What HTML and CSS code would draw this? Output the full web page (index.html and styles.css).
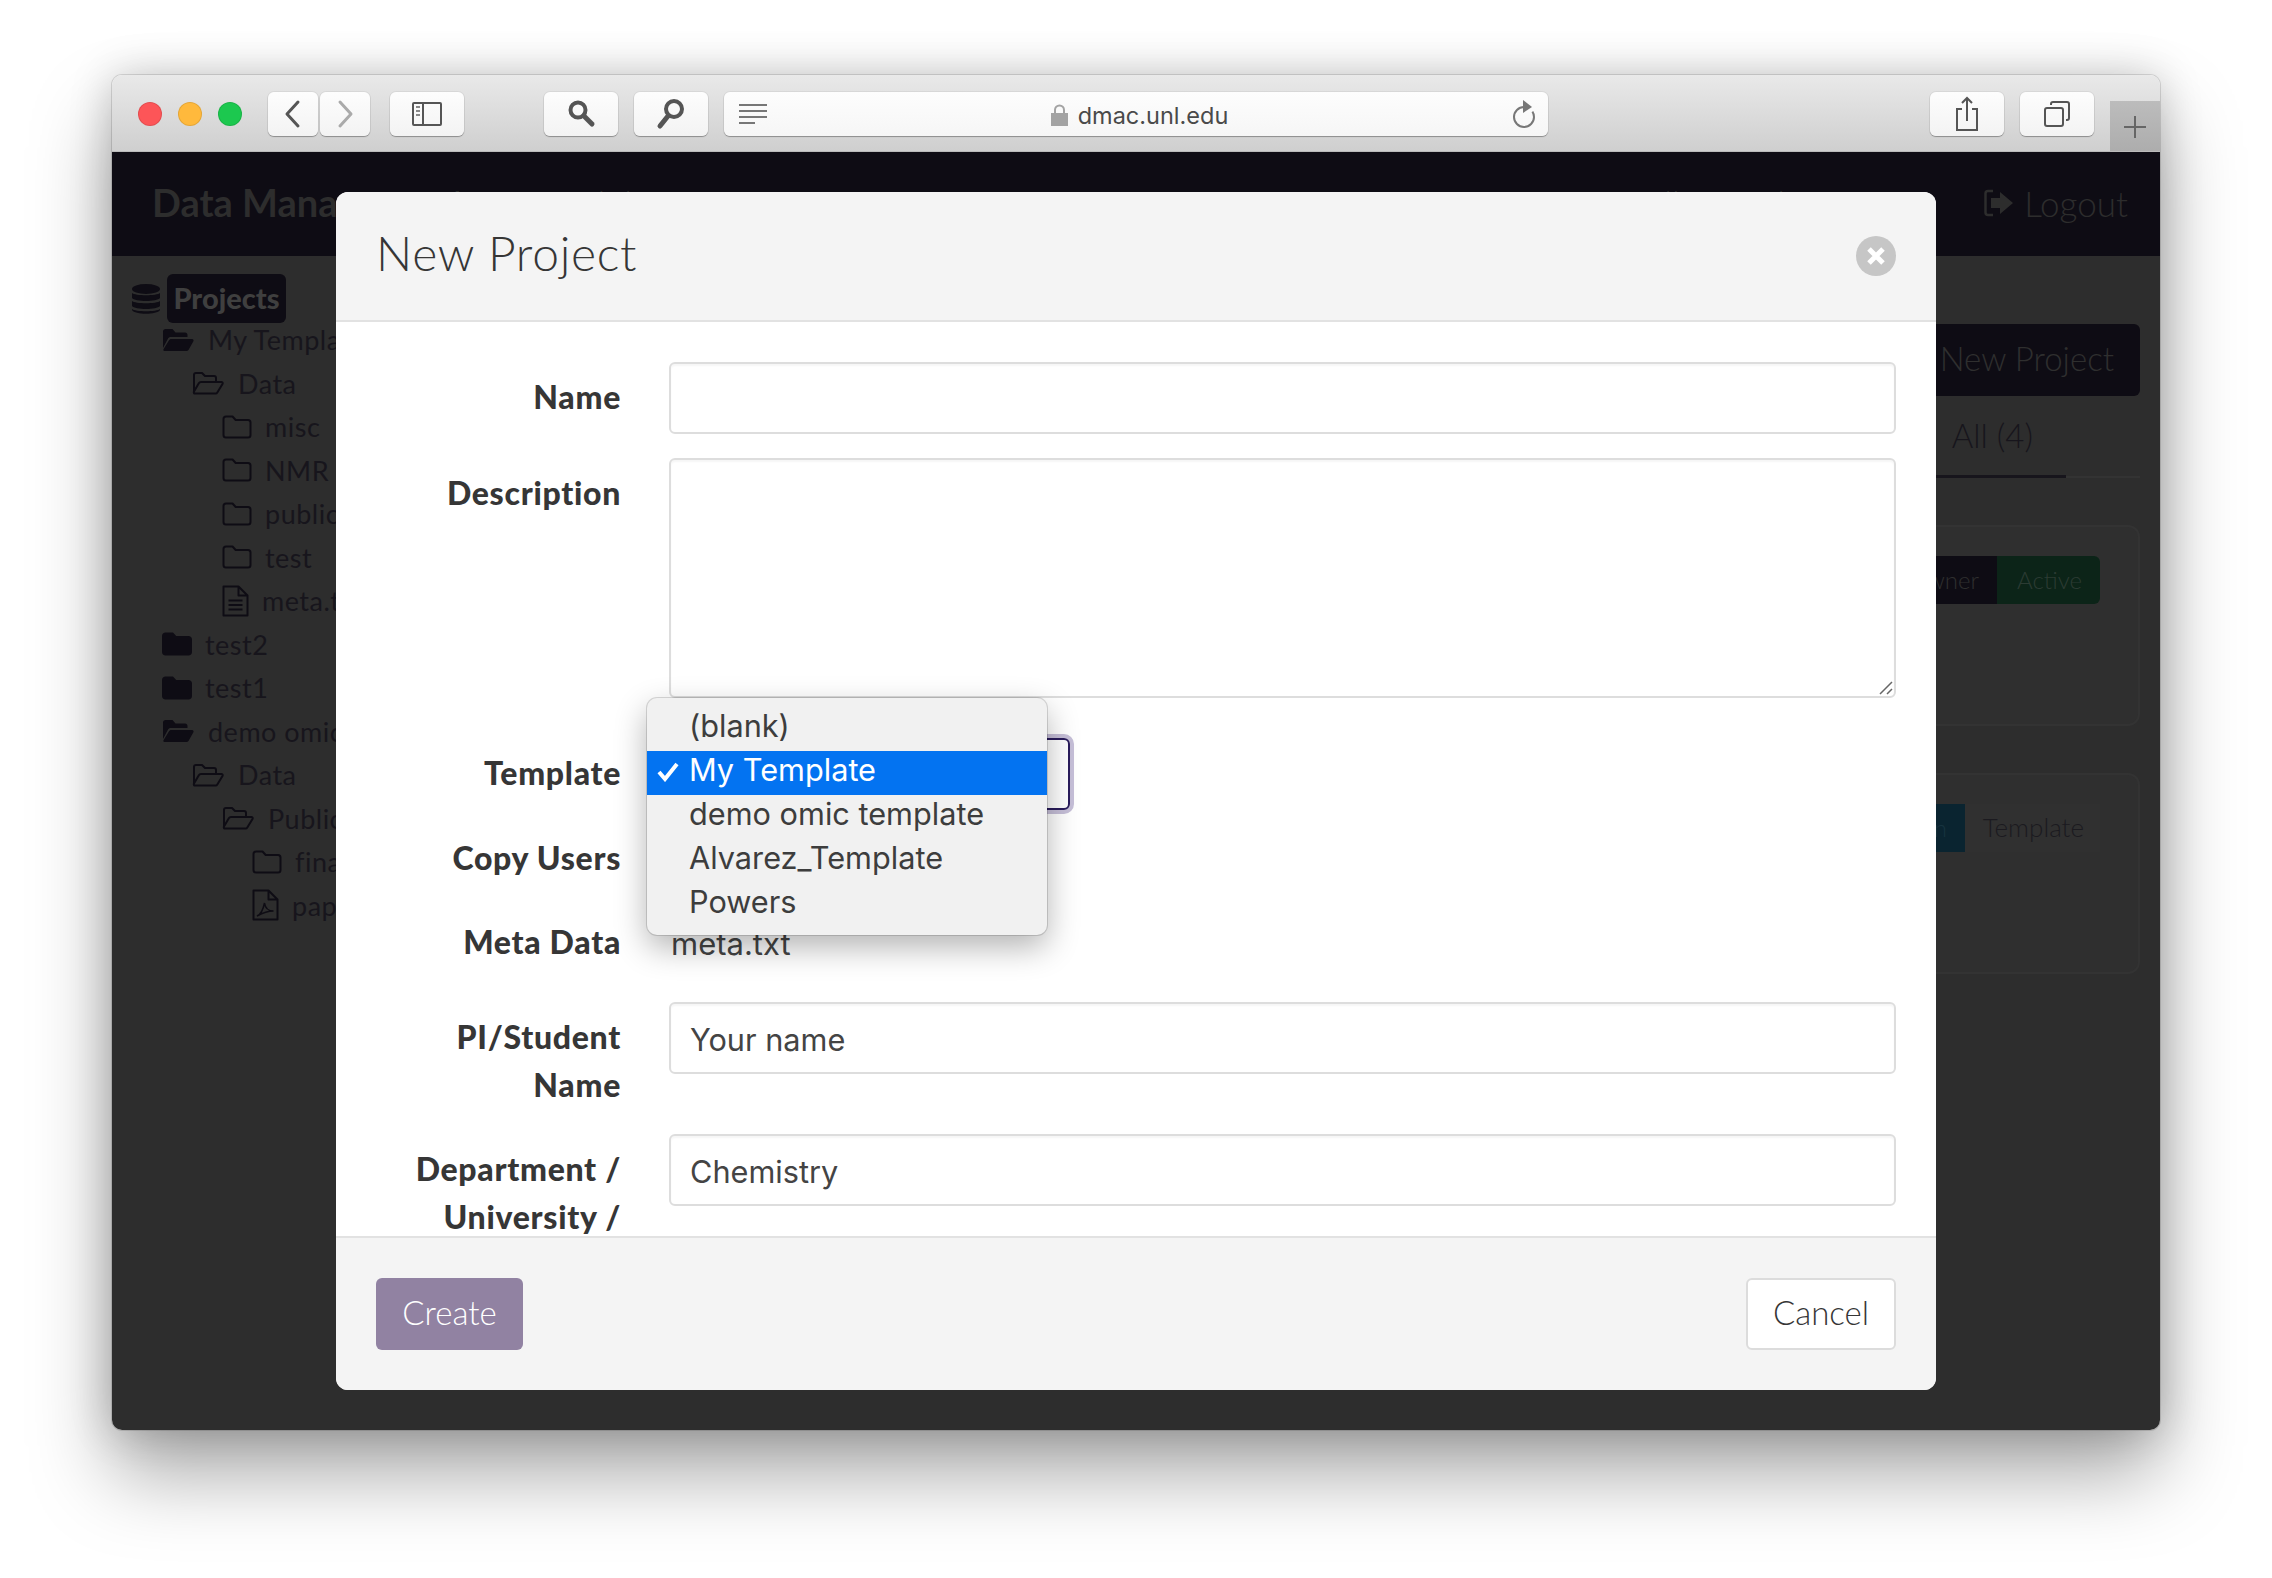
FILE: index.html
```html
<!DOCTYPE html>
<html lang="en">
<head>
    <meta charset="UTF-8">
    <title>New Project</title>
    <link rel="stylesheet" href="styles.css">
</head>
<body>
    <svg class="sprite" width="0" height="0">
        <symbol id="folder-open-solid" viewBox="0 0 32 24">
            <path d="M1 3.500C1 2 2 1 3.500 1h7l3 3.500H23c1.500 0 2.500 1 2.500 2.500v2H9c-1.500 0-2.500.6-3.200 2L1 20z"/>
            <path d="M9.500 11H30c1.300 0 2 1.100 1.400 2.200L26.500 22c-.5.700-1.200 1-2 1H2.500c-1 0-1.500-.8-1-1.700l5.500-9c.6-.9 1.400-1.300 2.500-1.300z"/>
        </symbol>
        <symbol id="folder-open" viewBox="0 0 32 24">
            <path fill="none" stroke="currentColor" stroke-width="2" stroke-linejoin="round" d="M2 20V4c0-1.300.7-2 2-2h6l3 3h9c1.300 0 2 .7 2 2v3M2.500 22.500h21c.8 0 1.400-.3 1.800-1L30.500 13c.5-1-.1-2-1.200-2H9c-1 0-1.700.4-2.200 1.200L2 20.500c-.4 1 0 2 .5 2z"/>
        </symbol>
        <symbol id="folder" viewBox="0 0 30 24">
            <path fill="none" stroke="currentColor" stroke-width="2" stroke-linejoin="round" d="M1.500 4c0-1.500 1-2.500 2.500-2.500h6.500l3.200 3.500H26c1.500 0 2.500 1 2.500 2.500V20c0 1.500-1 2.500-2.500 2.500H4c-1.500 0-2.500-1-2.500-2.500z"/>
        </symbol>
        <symbol id="folder-solid" viewBox="0 0 30 24">
            <path d="M0 4c0-2 1.500-3.500 3.500-3.500h7.500l3.200 3.500H26.500c2 0 3.500 1.500 3.500 3.500V20c0 2-1.500 3.500-3.500 3.500h-23C1.500 23.500 0 22 0 20z"/>
        </symbol>
        <symbol id="file-text" viewBox="0 0 27 32">
            <path fill="none" stroke="currentColor" stroke-width="2" stroke-linejoin="round" d="M1.500 1.500h15l9 9v20h-24zM16.500 1.500v9h9"/>
            <path fill="none" stroke="currentColor" stroke-width="2" d="M6.500 15.500h14M6.500 20h14M6.500 24.500h14"/>
        </symbol>
        <symbol id="file-pdf" viewBox="0 0 27 32">
            <path fill="none" stroke="currentColor" stroke-width="2" stroke-linejoin="round" d="M1.500 1.500h15l9 9v20h-24zM16.500 1.500v9h9"/>
            <path fill="none" stroke="currentColor" stroke-width="1.500" d="M5 27c3-1 6-6 7.500-13 .7 5 4 8 9 8-5 0-11 2-16.500 5z"/>
        </symbol>
    </svg>

    <div class="window">
        <div class="toolbar">
            <span class="light light-red"></span>
            <span class="light light-yellow"></span>
            <span class="light light-green"></span>

            <div class="tool tool-nav tool-back">
                <svg width="22" height="32" viewBox="0 0 22 32"><path fill="none" stroke="#555" stroke-width="3" stroke-linecap="round" stroke-linejoin="round" d="M16 4 5 16l11 12"/></svg>
            </div>
            <div class="tool tool-nav">
                <svg width="22" height="32" viewBox="0 0 22 32"><path fill="none" stroke="#aaa" stroke-width="3" stroke-linecap="round" stroke-linejoin="round" d="M6 4l11 12L6 28"/></svg>
            </div>
            <div class="tool tool-wide tool-sidebar">
                <svg width="30" height="24" viewBox="0 0 30 24">
                    <rect x="1" y="1" width="28" height="22" rx="1" fill="none" stroke="#555" stroke-width="2"/>
                    <path stroke="#555" stroke-width="2" d="M11 1v22"/>
                    <path stroke="#888" stroke-width="2" d="M4 5h4M4 9h4M4 13h4"/>
                </svg>
            </div>
            <div class="tool tool-wide tool-search">
                <svg width="30" height="30" viewBox="0 0 30 30">
                    <circle cx="12" cy="11" r="7.500" fill="none" stroke="#555" stroke-width="4"/>
                    <path stroke="#555" stroke-width="5" stroke-linecap="round" d="M18 17l8 8"/>
                </svg>
            </div>
            <div class="tool tool-wide tool-find">
                <svg width="30" height="32" viewBox="0 0 30 32">
                    <circle cx="18" cy="11" r="8" fill="none" stroke="#555" stroke-width="4"/>
                    <path stroke="#555" stroke-width="5" stroke-linecap="round" d="M12 18l-8 10"/>
                </svg>
            </div>
            <div class="urlbar">
                <svg class="reader" width="30" height="22" viewBox="0 0 30 22">
                    <path stroke="#777" stroke-width="2" d="M1 2h28M1 8h28M1 14h28M1 20h16"/>
                </svg>
                <div class="url">
                    <svg width="17" height="22" viewBox="0 0 17 22">
                        <path fill="none" stroke="#a3a3a3" stroke-width="2" d="M4 10V6a4.500 4.500 0 0 1 9 0v4"/>
                        <rect y="9" width="17" height="13" fill="#a3a3a3"/>
                    </svg>
                    dmac.unl.edu
                </div>
                <svg class="reload" width="26" height="28" viewBox="0 0 26 28">
                    <path fill="none" stroke="#777" stroke-width="2" d="M13 7a10 10 0 1 0 10 10c0-2-.6-4-1.600-5.400"/>
                    <path fill="#777" d="M12 0l9 7-9 6z"/>
                </svg>
            </div>
            <div class="tool tool-action tool-share">
                <svg width="24" height="36" viewBox="0 0 24 36">
                    <path fill="none" stroke="#555" stroke-width="2" d="M7 13H2v21h20V13h-5M12 25V2M7 7l5-5 5 5"/>
                </svg>
            </div>
            <div class="tool tool-action">
                <svg width="26" height="26" viewBox="0 0 26 26">
                    <rect x="1" y="7" width="18" height="18" rx="2" fill="none" stroke="#555" stroke-width="2"/>
                    <path fill="none" stroke="#555" stroke-width="2" d="M7 4V3c0-1 .7-2 2-2h14c1 0 2 1 2 2v14c0 1-.7 2-2 2h-1"/>
                </svg>
            </div>
            <div class="new-tab">
                <svg width="24" height="24" viewBox="0 0 24 24"><path stroke="#666" stroke-width="2" d="M12 1v22M1 12h22"/></svg>
            </div>
        </div>

        <div class="page">
            <nav class="navbar">
                <span class="brand">Data Management</span>
                <span class="nav-link">Modules</span>
                <span class="nav-spacer"></span>
                <span class="nav-link">Hello, Student</span>
                <span class="nav-logout">
                    <svg width="29" height="28" viewBox="0 0 29 28">
                        <path fill="none" stroke="currentColor" stroke-width="2.500" d="M9 2H4C2.500 2 1.500 3 1.500 4.500v19C1.500 25 2.500 26 4 26h5"/>
                        <path fill="currentColor" d="M7 9h9V3l13 11-13 11v-6H7z"/>
                    </svg>
                    Logout
                </span>
            </nav>

            <div class="content">
                <aside class="sidebar">
                    <div class="tree-root">
                        <svg width="28" height="30" viewBox="0 0 28 30">
                            <ellipse cx="14" cy="5" rx="14" ry="5"/>
                            <path d="M0 9c3 3 25 3 28 0v5c-3 4-25 4-28 0zM0 17c3 3 25 3 28 0v5c-3 4-25 4-28 0zM0 25c3 3 25 3 28 0v1c-3 5-25 5-28 0z"/>
                        </svg>
                        <span class="tree-badge">Projects</span>
                    </div>
                    <div class="tree-row depth-0 gap-wide"><svg class="icon-folder-open"><use href="#folder-open-solid"/></svg>My Template</div>
                    <div class="tree-row depth-1 gap-wide"><svg class="icon-folder-open"><use href="#folder-open"/></svg>Data</div>
                    <div class="tree-row depth-2"><svg class="icon-folder"><use href="#folder"/></svg>misc</div>
                    <div class="tree-row depth-2"><svg class="icon-folder"><use href="#folder"/></svg>NMR</div>
                    <div class="tree-row depth-2"><svg class="icon-folder"><use href="#folder"/></svg>public</div>
                    <div class="tree-row depth-2"><svg class="icon-folder"><use href="#folder"/></svg>test</div>
                    <div class="tree-row depth-2"><svg class="icon-file"><use href="#file-text"/></svg>meta.txt</div>
                    <div class="tree-row depth-0"><svg class="icon-folder"><use href="#folder-solid"/></svg>test2</div>
                    <div class="tree-row depth-0"><svg class="icon-folder"><use href="#folder-solid"/></svg>test1</div>
                    <div class="tree-row depth-0 gap-wide"><svg class="icon-folder-open"><use href="#folder-open-solid"/></svg>demo omic template</div>
                    <div class="tree-row depth-1 gap-wide"><svg class="icon-folder-open"><use href="#folder-open"/></svg>Data</div>
                    <div class="tree-row depth-2 gap-wide"><svg class="icon-folder-open"><use href="#folder-open"/></svg>Public</div>
                    <div class="tree-row depth-3"><svg class="icon-folder"><use href="#folder"/></svg>final</div>
                    <div class="tree-row depth-3"><svg class="icon-file"><use href="#file-pdf"/></svg>paper.pdf</div>
                </aside>

                <main class="main">
                    <div class="main-actions"><span class="btn-dark">New Project</span></div>
                    <div class="tabs"><span class="tab-active">All (4)</span></div>
                    <div class="card">
                        <span class="badge badge-owner">Owner</span><span class="badge badge-active">Active</span>
                    </div>
                    <div class="card">
                        <span class="badge badge-blue">Admin</span><span class="badge badge-plain">Template</span>
                    </div>
                </main>
            </div>

            <div class="modal">
                <div class="modal-header">
                    <h1 class="modal-title">New Project</h1>
                    <span class="modal-close">
                        <svg width="18" height="18" viewBox="0 0 18 18"><path stroke="#fff" stroke-width="5" d="M2 2l14 14M16 2 2 16"/></svg>
                    </span>
                </div>
                <div class="modal-body">
                    <form class="form">
                        <label class="form-label">Name</label>
                        <input class="form-input" type="text">

                        <label class="form-label">Description</label>
                        <div class="textarea-wrap">
                            <textarea class="form-input form-textarea"></textarea>
                            <svg class="resize-grip" width="14" height="14" viewBox="0 0 14 14">
                                <path stroke="#666" stroke-width="1.500" d="M1 13 13 1M8 13l5-5"/>
                            </svg>
                        </div>

                        <label class="form-label form-label-select">Template</label>
                        <div class="select-wrap">
                            <div class="form-select">My Template</div>
                            <ul class="dropdown">
                                <li>(blank)</li>
                                <li class="selected">
                                    <svg width="22" height="20" viewBox="0 0 22 20"><path fill="none" stroke="#fff" stroke-width="4" d="M2 10l6 7L20 2"/></svg>
                                    My Template
                                </li>
                                <li>demo omic template</li>
                                <li>Alvarez_Template</li>
                                <li>Powers</li>
                            </ul>
                        </div>

                        <label class="form-label form-label-plain">Copy Users</label>
                        <div class="form-static"></div>

                        <label class="form-label form-label-plain">Meta Data</label>
                        <div class="form-static">meta.txt</div>

                        <label class="form-label form-label-tall">PI/Student Name</label>
                        <input class="form-input" type="text" value="Your name">

                        <label class="form-label">Department / University / Institution</label>
                        <input class="form-input" type="text" value="Chemistry">
                    </form>
                </div>
                <div class="modal-footer">
                    <span class="btn btn-create">Create</span>
                    <span class="btn btn-cancel">Cancel</span>
                </div>
            </div>
        </div>
    </div>
</body>
</html>
```

FILE: styles.css
```css
* {
    box-sizing: border-box;
}
html, body {
    margin: 0;
    height: 100%;
    background: #fff;
}
body {
    padding: 75px 112px 0;
    font-family: "Lato", "Noto Sans", sans-serif;
    overflow: hidden;
}
.sprite {
    position: absolute;
}

/* browser window */
.window {
    height: 1355px;
    border-radius: 10px;
    overflow: hidden;
    box-shadow: 0 0 0 1px rgba(0, 0, 0, 0.12), 0 44px 80px rgba(0, 0, 0, 0.34), 0 0 44px rgba(0, 0, 0, 0.2);
    display: flex;
    flex-direction: column;
}
.toolbar {
    height: 77px;
    flex: none;
    padding-top: 17px;
    display: flex;
    align-items: flex-start;
    background: linear-gradient(#e9e9e9, #cfcfcf);
    border-bottom: 1px solid #bbb;
    position: relative;
}
.light {
    width: 24px;
    height: 24px;
    border-radius: 50%;
    margin-top: 10px;
    margin-right: 16px;
    border: 1px solid rgba(0, 0, 0, 0.1);
}
.light-red {
    margin-left: 26px;
    background: #fd5558;
}
.light-yellow {
    background: #ffb93c;
}
.light-green {
    background: #1cc84f;
    margin-right: 26px;
}
.tool {
    height: 44px;
    border-radius: 6px;
    background: linear-gradient(#fdfdfd, #f3f3f3);
    box-shadow: 0 1px 1px rgba(0, 0, 0, 0.3), 0 0 0 1px rgba(0, 0, 0, 0.05);
    display: flex;
    align-items: center;
    justify-content: center;
}
.tool-nav {
    width: 50px;
}
.tool-back {
    margin-right: 2px;
}
.tool-wide {
    width: 74px;
}
.tool-sidebar {
    margin-left: 20px;
    margin-right: 80px;
}
.tool-search {
    margin-right: 16px;
}
.tool-find {
    margin-right: 16px;
}
.urlbar {
    width: 824px;
    height: 44px;
    border-radius: 6px;
    background: linear-gradient(#fdfdfd, #f6f6f6);
    box-shadow: 0 1px 1px rgba(0, 0, 0, 0.3), 0 0 0 1px rgba(0, 0, 0, 0.05);
    display: flex;
    align-items: center;
    padding: 0 11px 0 14px;
}
.url {
    flex: 1;
    display: flex;
    align-items: center;
    justify-content: center;
    gap: 10px;
    padding-top: 2px;
    font-family: "Inter", "Liberation Sans", sans-serif;
    font-size: 23.500px;
    color: #4a4a4a;
}
.tool-action {
    width: 74px;
    margin-left: 16px;
}
.tool-share {
    margin-left: 382px;
}
.new-tab {
    position: absolute;
    right: 0;
    top: 26px;
    width: 50px;
    height: 50px;
    background: linear-gradient(#bcbcbc, #adadad);
    display: flex;
    align-items: center;
    justify-content: center;
    padding-top: 2px;
}

/* page behind the dimmed backdrop */
.page {
    flex: 1;
    position: relative;
    background: #2d2d2d;
    overflow: hidden;
}
.navbar {
    height: 104px;
    background: #0e0c14;
    color: #2d2d2d;
    display: flex;
    align-items: center;
    padding: 0 32px 2px 40px;
    font-size: 35px;
    font-weight: 300;
}
.brand {
    font-size: 38px;
    font-weight: 700;
    margin: -2px 70px 0 0;
}
.nav-spacer {
    flex: 1;
}
.nav-link {
    margin-right: 150px;
}
.nav-logout {
    display: flex;
    align-items: center;
    gap: 11px;
}
.content {
    display: flex;
}
.sidebar {
    width: 400px;
    padding: 18px 0 0 20px;
    color: #17151c;
    font-size: 27px;
}
.tree-root {
    display: flex;
    align-items: center;
    gap: 7px;
    height: 49px;
    margin-bottom: -5px;
    fill: #0e0c14;
}
.tree-badge {
    background: #0e0c14;
    color: #3f3f3f;
    font-size: 29px;
    font-weight: 900;
    border-radius: 6px;
    height: 49px;
    width: 119px;
    line-height: 47px;
    text-align: center;
}
.tree-row {
    display: flex;
    align-items: center;
    height: 43.500px;
    letter-spacing: 0.5px;
    gap: 13px;
    fill: #0e0c14;
    color: #17151c;
    white-space: nowrap;
}
.tree-row svg {
    color: #0e0c14;
    flex: none;
}
.gap-wide {
    gap: 14px;
}
.depth-0 {
    padding-left: 30px;
}
.depth-1 {
    padding-left: 60px;
}
.depth-2 {
    padding-left: 90px;
}
.depth-3 {
    padding-left: 120px;
}
.icon-folder-open {
    width: 32px;
    height: 24px;
}
.icon-folder {
    width: 30px;
    height: 24px;
}
.icon-file {
    width: 27px;
    height: 32px;
}
.main {
    flex: 1;
    padding: 68px 20px 0 0;
}
.main-actions {
    text-align: right;
}
.btn-dark {
    display: inline-block;
    height: 72px;
    line-height: 68px;
    padding: 0 26px;
    background: #0e0c14;
    color: #2f2f2f;
    font-size: 33px;
    font-weight: 300;
    border-radius: 6px;
}
.tabs {
    margin-top: 18px;
    height: 64px;
    font-size: 33px;
    font-weight: 300;
    color: #17151c;
    border-bottom: 2px solid #333;
    text-align: right;
    padding-right: 74px;
}
.tab-active {
    display: inline-block;
    height: 64px;
    line-height: 42px;
    padding: 0 33px 0 320px;
    border-bottom: 3px solid #17151c;
}
.card {
    height: 201px;
    margin-top: 47px;
    background: #2f2f2f;
    border: 2px solid #333;
    border-radius: 12px;
    padding: 29px 38px 0 0;
    text-align: right;
    font-size: 24px;
    font-weight: 300;
    display: flex;
    justify-content: flex-end;
    align-items: flex-start;
}
.badge {
    height: 48px;
    line-height: 48px;
    padding: 0 18px;
    white-space: nowrap;
}
.badge-owner {
    background: #0e0c14;
    color: #2f2f2f;
}
.badge-active {
    background: #0c2418;
    color: #2b3b33;
    width: 103px;
    border-radius: 0 6px 6px 0;
}
.badge-blue {
    background: #0a2430;
    color: #17333f;
}
.badge-plain {
    width: 135px;
    padding: 0 16px 0 14px;
    font-size: 26px;
    line-height: 46px;
    color: #1b1a1f;
    background: #303030;
}

/* modal */
.modal {
    position: absolute;
    left: 224px;
    top: 40px;
    width: 1600px;
    height: 1198px;
    border-radius: 12px;
    overflow: hidden;
    background: #fff;
    display: flex;
    flex-direction: column;
}
.modal-header {
    height: 130px;
    flex: none;
    background: #f4f4f4;
    border-bottom: 2px solid #e2e2e2;
    display: flex;
    align-items: center;
    justify-content: space-between;
    padding: 0 40px;
}
.modal-title {
    margin: -8px 0 0;
    font-size: 48px;
    font-weight: 300;
    color: #363636;
    letter-spacing: 0.7px;
}
.modal-close {
    width: 40px;
    height: 40px;
    border-radius: 50%;
    background: #c6c6c6;
    display: flex;
    align-items: center;
    justify-content: center;
}
.modal-body {
    flex: 1;
    min-height: 0;
    overflow: hidden;
    padding: 40px 40px 0;
}
.form {
    display: grid;
    grid-template-columns: 245px 1fr;
    column-gap: 48px;
    align-items: start;
}
.form-label {
    text-align: right;
    font-size: 32px;
    font-weight: 900;
    letter-spacing: 0.7px;
    line-height: 48px;
    color: #363636;
    padding: 11px 0 13px;
}
.form-label-tall {
    margin-bottom: 12px;
}
.form-input {
    display: block;
    width: 100%;
    height: 72px;
    margin-bottom: 24px;
    padding: 2px 19px 0;
    border: 2px solid #ddd;
    border-radius: 6px;
    box-shadow: inset 0 2px 2px rgba(0, 0, 0, 0.04);
    font-family: "Inter", "Liberation Sans", sans-serif;
    font-size: 30.700px;
    color: #444;
    background: #fff;
    outline: none;
}
.textarea-wrap {
    position: relative;
    height: 240px;
    margin-bottom: 40px;
}
.form-textarea {
    height: 240px;
    resize: none;
}
.resize-grip {
    position: absolute;
    right: 3px;
    bottom: 3px;
}
.select-wrap {
    position: relative;
    height: 72px;
    margin-bottom: 24px;
}
.form-select {
    width: 401px;
    height: 72px;
    border: 2px solid #2a1c5c;
    border-radius: 6px;
    box-shadow: 0 0 0 4px #c6bfd8;
}
.form-label-plain {
    padding: 0;
    margin-bottom: 36px;
}
.form-static {
    font-family: "Inter", "Liberation Sans", sans-serif;
    font-size: 31px;
    line-height: 48px;
    padding-top: 2px;
    color: #444;
    padding-left: 2px;
}

/* open native select menu */
.dropdown {
    position: absolute;
    left: -22px;
    top: -40px;
    width: 400px;
    margin: 0;
    padding: 9px 0 8px;
    list-style: none;
    background: #f1f1f1;
    border-radius: 10px;
    box-shadow: 0 0 0 1px rgba(0, 0, 0, 0.14), 0 12px 32px rgba(0, 0, 0, 0.3);
    font-family: "Inter", "Liberation Sans", sans-serif;
    font-size: 30.700px;
    color: #3d3d3d;
}
.dropdown li {
    position: relative;
    height: 44px;
    line-height: 37px;
    padding-left: 42px;
}
.dropdown .selected {
    background: #0373f1;
    color: #fff;
}
.dropdown .selected svg {
    position: absolute;
    left: 10px;
    top: 11px;
}

/* footer */
.modal-footer {
    height: 154px;
    flex: none;
    background: #f4f4f4;
    border-top: 2px solid #e2e2e2;
    display: flex;
    align-items: center;
    justify-content: space-between;
    padding: 0 40px;
}
.btn {
    height: 72px;
    line-height: 68px;
    border-radius: 6px;
    font-size: 33px;
    font-weight: 300;
    text-align: center;
}
.btn-create {
    width: 147px;
    background: #9182a2;
    color: #fff;
}
.btn-cancel {
    width: 150px;
    line-height: 64px;
    background: #fff;
    border: 2px solid #dcdcdc;
    color: #363636;
}
```
